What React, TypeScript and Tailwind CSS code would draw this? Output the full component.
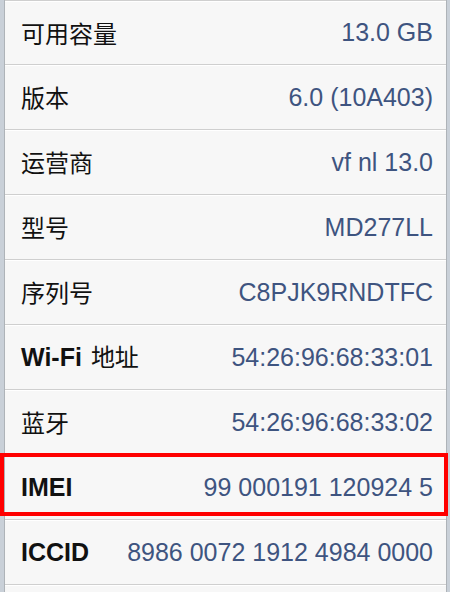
import React from "react";

type Row = { label: React.ReactNode; value: string; highlight?: boolean };

const cjk = '"Noto Sans CJK SC", "Liberation Sans", sans-serif';

function Zh({ children, className = "" }: { children: React.ReactNode; className?: string }) {
  return (
    <span className={"text-[24px] font-normal " + className} style={{ fontFamily: cjk }}>
      {children}
    </span>
  );
}

function Latin({ children }: { children: React.ReactNode }) {
  return <span className="text-[25px] font-bold">{children}</span>;
}

const rows: Row[] = [
  { label: <Zh>可用容量</Zh>, value: "13.0 GB" },
  { label: <Zh>版本</Zh>, value: "6.0 (10A403)" },
  { label: <Zh>运营商</Zh>, value: "vf nl 13.0" },
  { label: <Zh>型号</Zh>, value: "MD277LL" },
  { label: <Zh>序列号</Zh>, value: "C8PJK9RNDTFC" },
  {
    label: (
      <>
        <Latin>Wi-Fi</Latin>
        <Zh className="ml-[9px]">地址</Zh>
      </>
    ),
    value: "54:26:96:68:33:01",
  },
  { label: <Zh>蓝牙</Zh>, value: "54:26:96:68:33:02" },
  { label: <Latin>IMEI</Latin>, value: "99 000191 120924 5", highlight: true },
  { label: <Latin>ICCID</Latin>, value: "8986 0072 1912 4984 0000" },
  { label: <Zh>&nbsp;</Zh>, value: "" },
];

export default function App() {
  return (
    <div
      className="w-[450px] h-[592px] overflow-hidden bg-[#c9d0d8] pl-[4px] pr-[3px]"
      style={{ fontFamily: '"Liberation Sans", "Noto Sans CJK SC", sans-serif' }}
    >
      <div className="h-full border-l border-r border-[#aeb3b8] bg-[#f7f7f7]">
        {rows.map((r, i) => (
          <div
            key={i}
            className={
              "relative flex items-center justify-between h-[65px] pl-[16px] pr-[13px] border-b border-[#cfcfcf] shadow-[inset_0_1px_0_#ffffff] " +
              (i === 0 ? "border-t" : "")
            }
          >
            <div className="flex items-baseline text-[#111111] whitespace-nowrap leading-none">{r.label}</div>
            <div className="text-[25px] text-[#3e5480] whitespace-nowrap leading-none">
              {r.value}
            </div>
            {r.highlight && (
              <div className="absolute left-[-5px] right-[-2px] top-[-2px] h-[63px] border-[4px] border-[#ff0000] pointer-events-none" />
            )}
          </div>
        ))}
      </div>
    </div>
  );
}
